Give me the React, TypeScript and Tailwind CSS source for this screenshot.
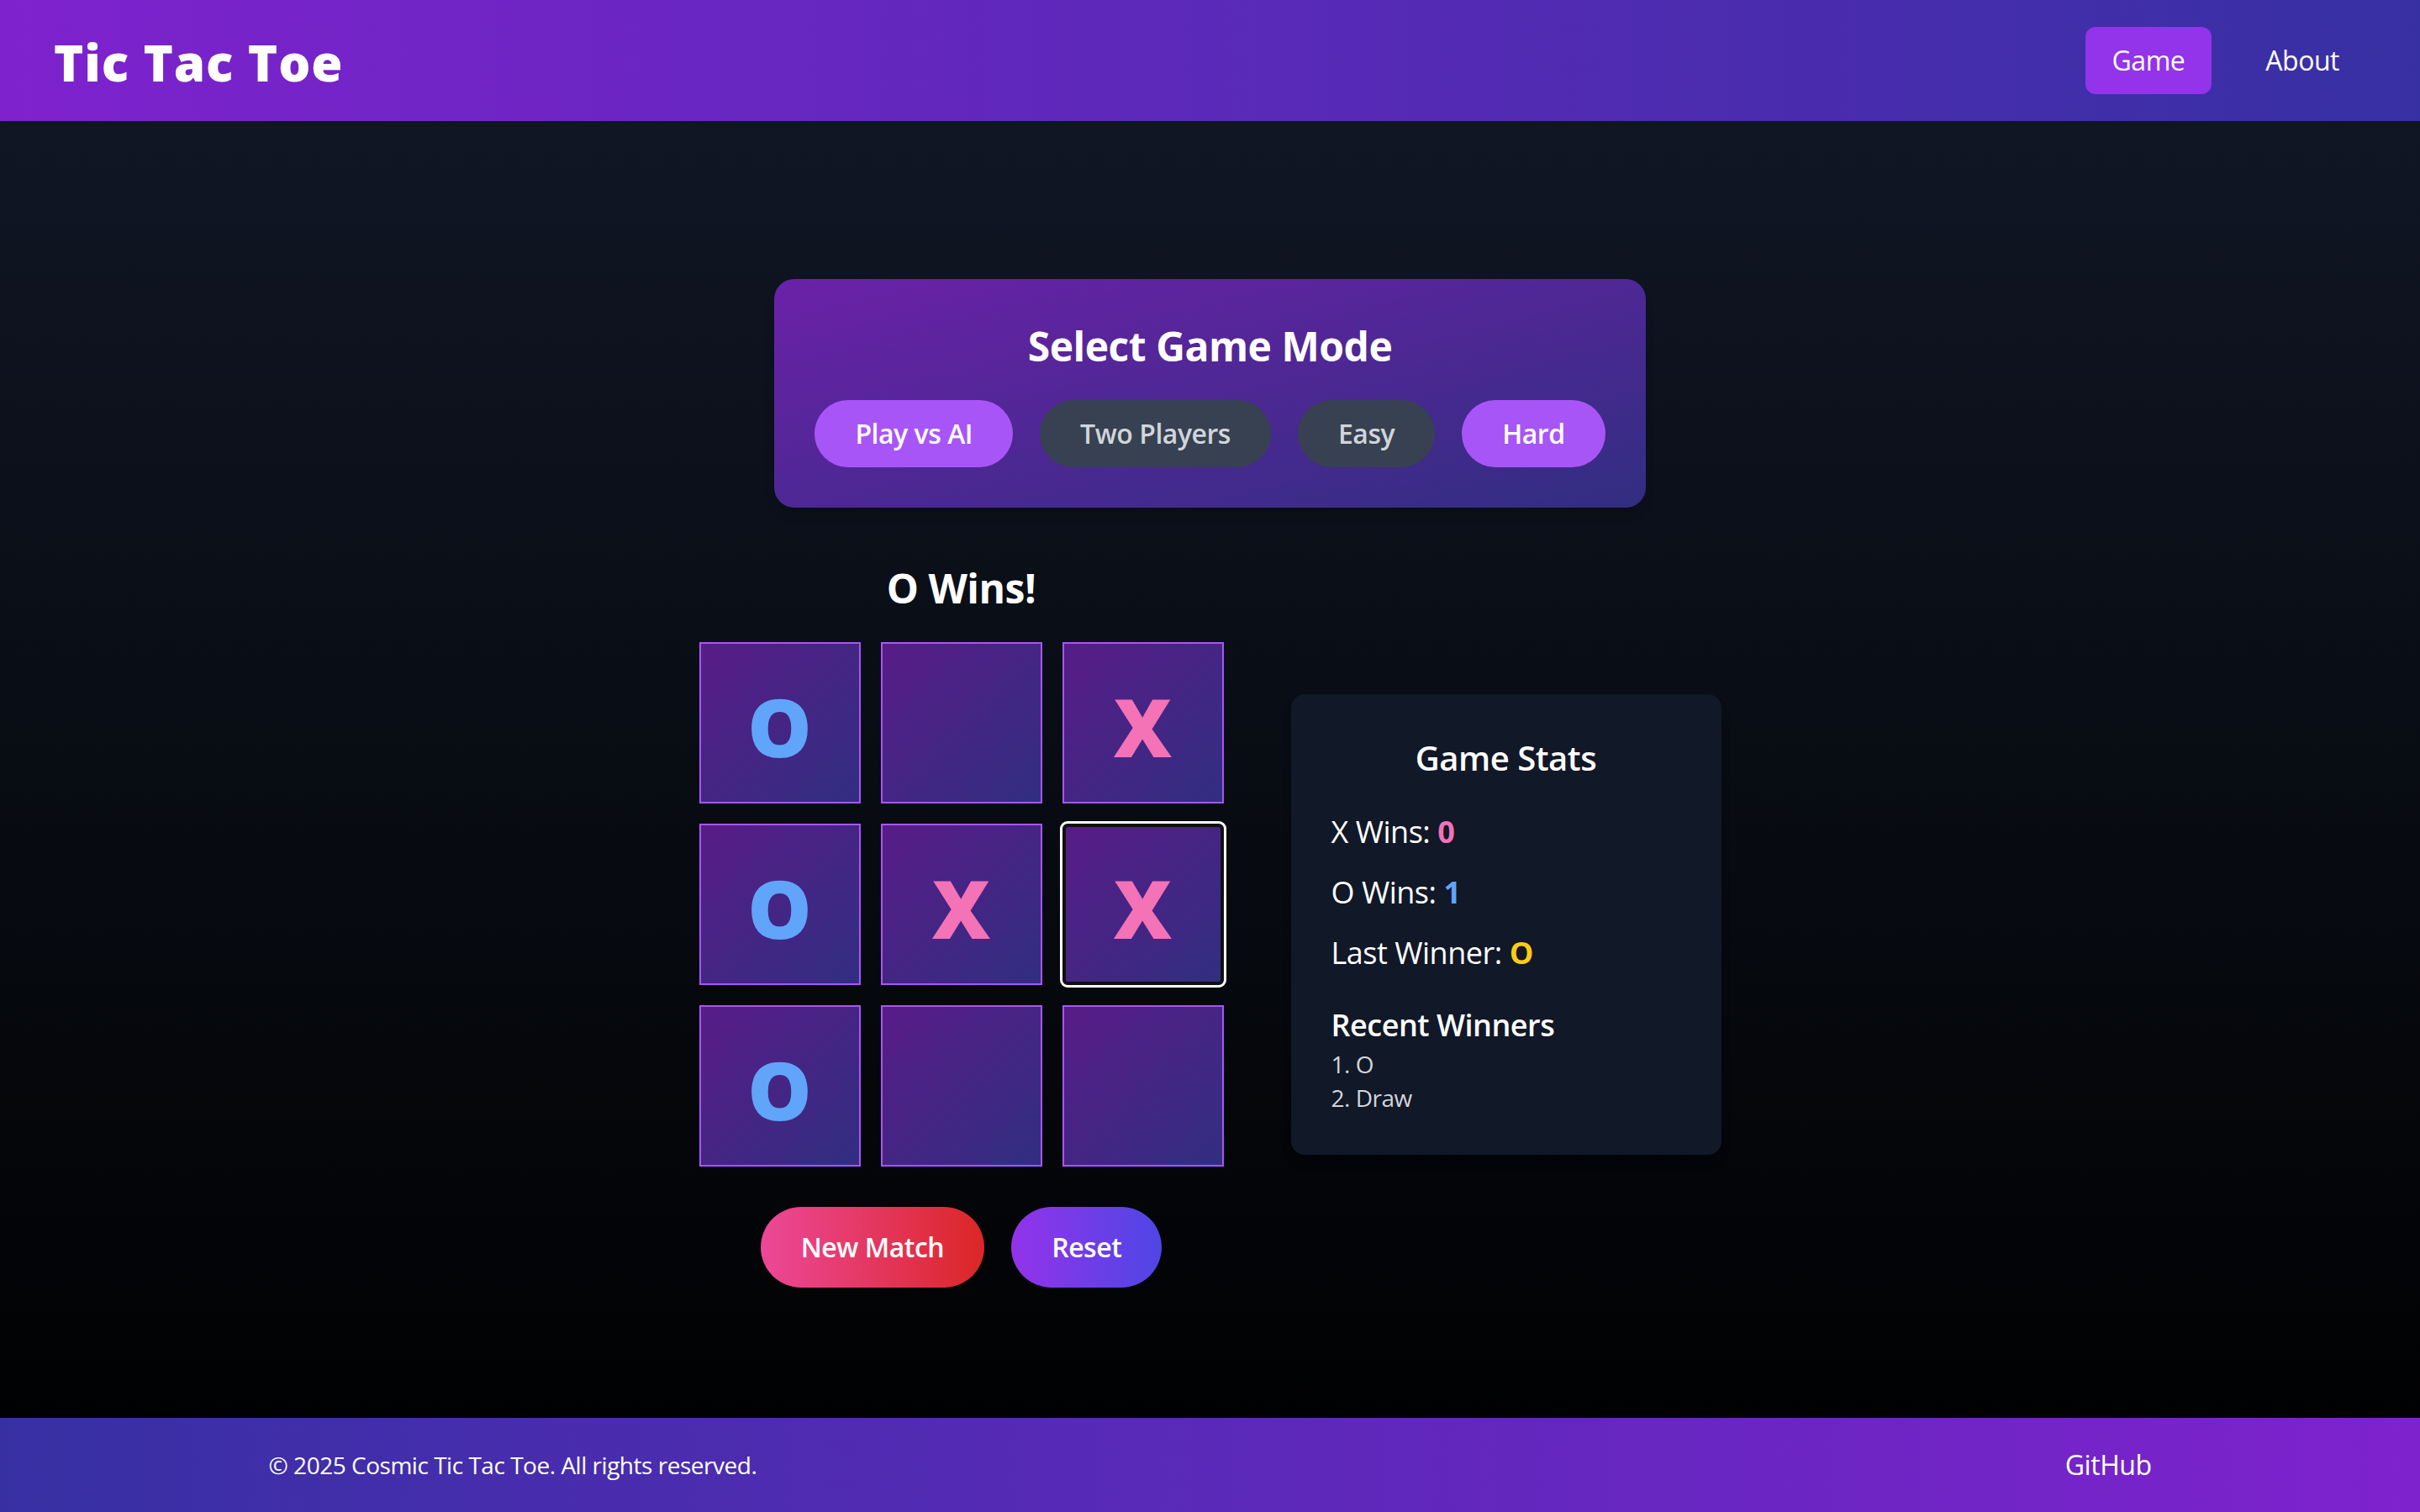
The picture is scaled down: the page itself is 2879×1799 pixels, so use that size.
import clsx from "clsx";

const board = ["O", "", "X", "O", "X", "X", "O", "", ""];
const recent = ["O", "Draw"];

function Cell({ value, focused }: { value: string; focused?: boolean }) {
  return (
    <button
      className={clsx(
        "flex h-[192px] w-[192px] items-center justify-center border-2 bg-linear-to-br/srgb from-[#581c87] to-[#312e81] pt-2 text-[96px] font-black leading-none tracking-normal",
        focused
          ? "rounded-[6px] border-[#101010] outline-3 outline-white shadow-[inset_0_0_0_2px_#101010]"
          : "border-[#a855f7]",
        value === "X" ? "text-[#f472b6]" : "text-[#60a5fa]"
      )}
    >
      {value}
    </button>
  );
}

export default function App() {
  return (
    <div className="flex min-h-screen flex-col bg-linear-to-b/srgb from-[#111827] to-black font-['Open_Sans',sans-serif] tracking-[-0.03em] text-white">
      {/* header */}
      <header className="flex items-center justify-between bg-linear-to-r/srgb from-[#7e22ce] to-[#3730a3] px-16 py-8">
        <h1 className="mt-1 text-[60px] font-extrabold leading-[72px] tracking-[0.015em]">Tic Tac Toe</h1>
        <nav className="flex gap-8">
          <a className="rounded-xl bg-[#9333ea] px-8 py-4 text-[32px] leading-[48px]">Game</a>
          <a className="rounded-xl px-8 py-4 text-[32px] leading-[48px]">About</a>
        </nav>
      </header>

      <main className="flex flex-1 flex-col items-center pt-[188px]">
        {/* mode select */}
        <div className="rounded-3xl bg-linear-to-br/srgb from-[#6b21a8] to-[#312e81] p-12 text-center shadow-lg">
          <h2 className="mb-8 text-[48px] font-bold leading-[64px]">Select Game Mode</h2>
          <div className="flex justify-center gap-8 text-[32px] font-semibold leading-[48px]">
            <button className="rounded-full bg-[#a855f7] px-12 py-4 text-white">Play vs AI</button>
            <button className="rounded-full bg-[#374151] px-12 py-4 text-[#d1d5db]">Two Players</button>
            <button className="rounded-full bg-[#374151] px-12 py-4 text-[#d1d5db]">Easy</button>
            <button className="rounded-full bg-[#a855f7] px-12 py-4 text-white">Hard</button>
          </div>
        </div>

        <div className="mt-16 flex items-center gap-20">
          {/* board */}
          <div className="flex flex-col items-center">
            <h2 className="mb-8 text-[48px] font-bold leading-[64px]">O Wins!</h2>
            <div className="grid grid-cols-3 gap-6">
              {board.map((v, i) => (
                <Cell key={i} value={v} focused={i === 5} />
              ))}
            </div>
            <div className="mt-12 flex gap-8 text-[32px] font-semibold leading-[48px]">
              <button className="rounded-full bg-linear-to-r/srgb from-[#ec4899] to-[#dc2626] px-12 py-6">New Match</button>
              <button className="rounded-full bg-linear-to-r/srgb from-[#9333ea] to-[#4f46e5] px-12 py-6">Reset</button>
            </div>
          </div>

          {/* stats */}
          <div className="w-[512px] rounded-2xl bg-[#111827] p-12 shadow-lg">
            <h3 className="mb-8 text-center text-[40px] font-semibold leading-[56px]">Game Stats</h3>
            <div className="flex flex-col gap-4 text-[36px] leading-[56px]">
              <p>
                X Wins: <span className="font-bold text-[#f472b6]">0</span>
              </p>
              <p>
                O Wins: <span className="font-bold text-[#60a5fa]">1</span>
              </p>
              <p>
                Last Winner: <span className="font-bold text-[#facc15]">O</span>
              </p>
            </div>
            <h4 className="mt-8 text-[36px] font-semibold leading-[52px]">Recent Winners</h4>
            <ol className="text-[28px] leading-[40px] text-[#d1d5db]">
              {recent.map((r, i) => (
                <li key={i}>
                  {i + 1}. {r}
                </li>
              ))}
            </ol>
          </div>
        </div>
      </main>

      <footer className="bg-linear-to-r/srgb from-[#3730a3] to-[#7e22ce] py-8">
        <div className="mx-auto flex max-w-[2304px] items-center justify-between px-8">
          <p className="text-[28px] leading-[40px]">© 2025 Cosmic Tic Tac Toe. All rights reserved.</p>
          <a className="text-[32px] leading-[48px]">GitHub</a>
        </div>
      </footer>
    </div>
  );
}
